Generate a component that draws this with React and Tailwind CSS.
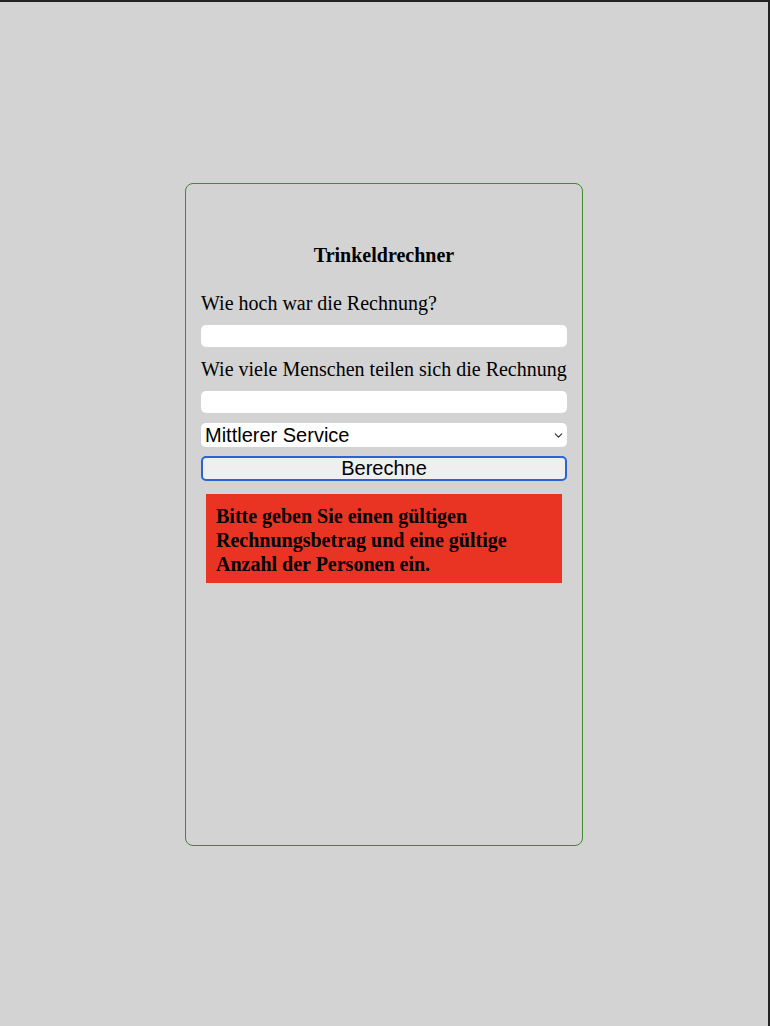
import { ChevronDown } from 'lucide-react'

const serif = { fontFamily: '"Liberation Serif", "Times New Roman", serif' }

export default function App() {
  return (
    <div className="h-[1026px] w-[770px] bg-[#d3d3d3] border-t-2 border-r-2 border-[#232323] overflow-hidden">
      <div
        className="mx-auto mt-[181px] w-[398px] h-[663px] rounded-lg border border-[#3f8a2a] px-[15px] font-['Liberation_Serif',serif] text-black"
      >
        <h3 className="mt-[60px] text-center text-[20px] font-bold leading-[23px]">Trinkeldrechner</h3>

        <label className="mt-[25px] block text-[20px] leading-[23px]">Wie hoch war die Rechnung?</label>
        <input type="text" className="mt-[10px] block h-[22px] w-full rounded-[5px] bg-white outline-none" />

        <label className="mt-[11px] block text-[20px] leading-[23px] whitespace-nowrap">
          Wie viele Menschen teilen sich die Rechnung
        </label>
        <input type="text" className="mt-[10px] block h-[22px] w-full rounded-[5px] bg-white outline-none" />

        <div className="relative mt-[10px] h-[24px] w-full rounded-[5px] bg-white">
          <span className="absolute left-[4px] top-0 text-[20px] leading-[24px] font-['Liberation_Sans',Arial,sans-serif]">
            Mittlerer Service
          </span>
          <ChevronDown className="absolute right-[2px] top-[6px] h-[13px] w-[13px] text-[#333]" strokeWidth={2.25} />
        </div>

        <button className="mt-[9px] block h-[25px] w-full rounded-[5px] border-2 border-[#2a63d4] bg-[#efefef] text-center text-[20px] leading-[19px] font-['Liberation_Sans',Arial,sans-serif]">
          Berechne
        </button>

        <div className="mx-[5px] mt-[13px] bg-[#e93424] px-[10px] pt-[10px] pb-[7px] text-[20px] font-bold leading-[24px]" style={serif}>
          Bitte geben Sie einen gültigen Rechnungsbetrag und eine gültige Anzahl der Personen ein.
        </div>
      </div>
    </div>
  )
}
